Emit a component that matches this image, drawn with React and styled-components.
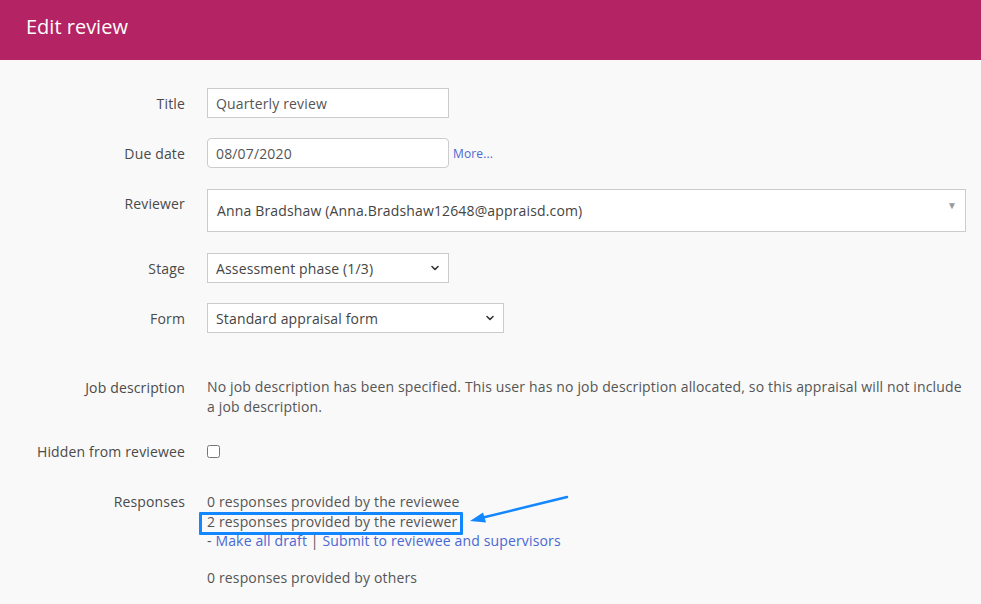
import React from "react";
import styled, { createGlobalStyle } from "styled-components";

const Global = createGlobalStyle`
  body {
    margin: 0;
    background: #f9f9f9;
    font-family: "Open Sans", "Noto Sans", sans-serif;
    color: #555;
    letter-spacing: 0.15px;
  }
`;

export default function App() {
  return (
    <>
      <Global />
      <Header>
        <h1>Edit review</h1>
      </Header>
      <Form>
        <Row $mb={20}>
          <Label>Title</Label>
          <Input $w={242} defaultValue="Quarterly review" />
        </Row>
        <Row $mb={21}>
          <Label>Due date</Label>
          <Inline>
            <Input $w={242} $round defaultValue="08/07/2020" />
            <More href="#">More...</More>
          </Inline>
        </Row>
        <Row $mb={21} $top>
          <Label $pad={5}>Reviewer</Label>
          <Combo>
            <span>Anna Bradshaw (Anna.Bradshaw12648@appraisd.com)</span>
            <Caret>▼</Caret>
          </Combo>
        </Row>
        <Row $mb={20}>
          <Label>Stage</Label>
          <SelectWrap $w={242}>
            <Select defaultValue="a">
              <option value="a">Assessment phase (1/3)</option>
            </Select>
            <Chevron />
          </SelectWrap>
        </Row>
        <Row $mb={44}>
          <Label>Form</Label>
          <SelectWrap $w={297}>
            <Select defaultValue="a">
              <option value="a">Standard appraisal form</option>
            </Select>
            <Chevron />
          </SelectWrap>
        </Row>
        <Row $mb={24} $top>
          <Label $pad={1}>Job description</Label>
          <Text>
            No job description has been specified. This user has no job
            description allocated, so this appraisal will not include a job
            description.
          </Text>
        </Row>
        <Row $mb={30}>
          <Label>Hidden from reviewee</Label>
          <Check type="checkbox" />
        </Row>
        <Row $top>
          <Label $pad={0}>Responses</Label>
          <Responses>
            <div>0 responses provided by the reviewee</div>
            <div>
              <Highlight>2 responses provided by the reviewer</Highlight>
            </div>
            <div>
              - <a href="#">Make all draft</a> | <a href="#">Submit to reviewee and supervisors</a>
            </div>
            <Gap />
            <div>0 responses provided by others</div>
            <Pointer viewBox="0 0 380 40" width="380" height="40">
              <line x1="360" y1="5" x2="272" y2="26.5" stroke="#1287ff" strokeWidth="2.5" strokeLinecap="round" />
              <polygon points="263,29 276,20.5 279,30.5" fill="#1287ff" />
            </Pointer>
          </Responses>
        </Row>
      </Form>
    </>
  );
}

function Chevron() {
  return (
    <ChevronIcon viewBox="0 0 10 10" width="10" height="10">
      <path d="M2 3.5 L5 6.5 L8 3.5" fill="none" stroke="#333" strokeWidth="1.6" strokeLinecap="round" strokeLinejoin="round" />
    </ChevronIcon>
  );
}

const Header = styled.header`
  height: 60px;
  background: #b42363;
  box-sizing: border-box;
  padding: 13px 26px 0;
  h1 {
    margin: 0;
    font-size: 20px;
    font-weight: 400;
    line-height: 28px;
    letter-spacing: 0;
    color: #fff;
  }
`;

const Form = styled.main`
  padding: 28px 15px 0 0;
`;

const Row = styled.div`
  display: grid;
  grid-template-columns: 185px 1fr;
  column-gap: 22px;
  align-items: ${(p) => (p.$top ? "start" : "center")};
  margin-bottom: ${(p) => p.$mb || 0}px;
`;

const Label = styled.div`
  text-align: right;
  font-size: 14px;
  line-height: 20px;
  color: #4a4a4a;
  padding-top: ${(p) => p.$pad ?? 1}px;
`;

const Inline = styled.div`
  display: flex;
  align-items: center;
  gap: 4px;
`;

const Input = styled.input`
  width: ${(p) => p.$w}px;
  height: 30px;
  box-sizing: border-box;
  border: 1px solid #ccc;
  border-radius: ${(p) => (p.$round ? "4px" : "0")};
  background: #fff;
  padding: 0 8px;
  font: 14px "Open Sans", sans-serif;
  letter-spacing: 0.15px;
  color: #555;
  outline: none;
`;

const More = styled.a`
  font-size: 12px;
  color: #4a68d2;
  text-decoration: none;
`;

const Combo = styled.div`
  height: 43px;
  box-sizing: border-box;
  border: 1px solid #ccc;
  background: #fff;
  display: flex;
  align-items: center;
  justify-content: space-between;
  padding: 0 8px 0 9px;
  font-size: 14px;
  color: #444;
`;

const Caret = styled.span`
  font-size: 10px;
  color: #999;
  align-self: flex-start;
  margin-top: 8px;
`;

const SelectWrap = styled.div`
  position: relative;
  width: ${(p) => p.$w}px;
`;

const Select = styled.select`
  appearance: none;
  width: 100%;
  height: 30px;
  box-sizing: border-box;
  border: 1px solid #ccc;
  border-radius: 0;
  background: #fff;
  padding: 0 24px 0 8px;
  font: 14px "Open Sans", sans-serif;
  letter-spacing: 0.15px;
  color: #444;
  outline: none;
`;

const ChevronIcon = styled.svg`
  position: absolute;
  right: 9px;
  top: 10px;
  pointer-events: none;
`;

const Text = styled.div`
  font-size: 14px;
  line-height: 20px;
  color: #555;
`;

const Check = styled.input`
  width: 13px;
  height: 13px;
  margin: 0;
`;

const Responses = styled.div`
  position: relative;
  font-size: 14px;
  line-height: 19.5px;
  color: #555;
  a {
    color: #4a68d2;
    text-decoration: none;
  }
`;

const Gap = styled.div`
  height: 17px;
`;

const Highlight = styled.span`
  position: relative;
  display: inline-block;
  &::after {
    content: "";
    position: absolute;
    top: 0px;
    bottom: -4px;
    left: -8px;
    right: -6px;
    border: 3px solid #1287ff;
    border-radius: 1px;
  }
`;

const Pointer = styled.svg`
  position: absolute;
  left: 0;
  top: 0;
  overflow: visible;
  pointer-events: none;
`;
